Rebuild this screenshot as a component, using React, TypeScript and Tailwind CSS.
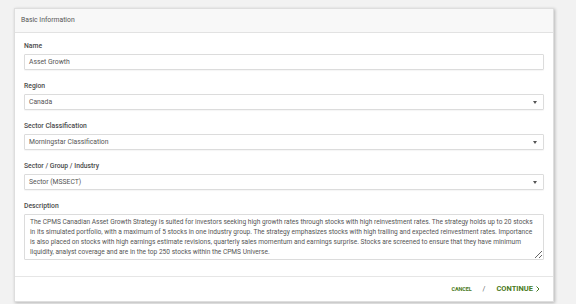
import React from "react";

const description = [
    "The CPMS Canadian Asset Growth Strategy is suited for investors seeking high growth rates through stocks with high reinvestment rates. The strategy holds up to 20 stocks",
    "in its simulated portfolio, with a maximum of 5 stocks in one industry group. The strategy emphasizes stocks with high trailing and expected reinvestment rates. Importance",
    "is also placed on stocks with high earnings estimate revisions, quarterly sales momentum and earnings surprise. Stocks are screened to ensure that they have minimum",
    "liquidity, analyst coverage and are in the top 250 stocks within the CPMS Universe.",
].join("\n");

function Label({ children }: { children: React.ReactNode }) {
    return <div className="h-[10px] leading-[10px] text-[6.8px] font-medium text-[#4a4a4a] mb-[3px]">{children}</div>;
}

function TextField({ label, value }: { label: string; value: string }) {
    return (
        <div className="mb-[11px]">
            <Label>{label}</Label>
            <div className="h-[16px] border border-[#dcdcdc] rounded-[1px] shadow-[0_1px_1px_rgba(0,0,0,0.04)] pl-[4px] flex items-center text-[6.8px] text-[#555]">
                {value}
            </div>
        </div>
    );
}

function SelectField({ label, value }: { label: string; value: string }) {
    return (
        <div className="mb-[11px]">
            <Label>{label}</Label>
            <div className="h-[16px] border border-[#dcdcdc] rounded-[1px] shadow-[0_1px_1px_rgba(0,0,0,0.04)] pl-[4px] pr-[6px] flex items-center justify-between text-[6.8px] text-[#555]">
                <span>{value}</span>
                <svg width="4" height="3" viewBox="0 0 4 3">
                    <path d="M0 0H4L2 3Z" fill="#555" />
                </svg>
            </div>
        </div>
    );
}

export default function App() {
    return (
        <div className="w-[576px] h-[304px] bg-[#f2f2f2] font-['Roboto',sans-serif] pt-[8px] pl-[14px] overflow-hidden">
            <div className="w-[540px] h-[294px] bg-white border border-[#dedede] shadow-[1px_1px_3px_rgba(0,0,0,0.25)] flex flex-col">
                {/* Header */}
                <div className="h-[24px] shrink-0 bg-[#f8f8f8] border-b border-[#e2e2e2] flex items-center pl-[6px] text-[6.8px] text-[#555]">
                    Basic Information
                </div>

                {/* Body */}
                <div className="flex-1 px-[9px] pt-[8px]">
                    <TextField label="Name" value="Asset Growth" />
                    <SelectField label="Region" value="Canada" />
                    <SelectField label="Sector Classification" value="Morningstar Classification" />
                    <SelectField label="Sector / Group / Industry" value="Sector (MSSECT)" />
                    <div>
                        <Label>Description</Label>
                        <textarea
                            readOnly
                            wrap="off"
                            value={description}
                            className="block w-full h-[46px] border border-[#dcdcdc] rounded-[1px] pl-[5px] pr-[4px] pt-[2px] text-[6.6px] leading-[10px] text-[#555] outline-none overflow-hidden font-['Roboto',sans-serif]"
                        />
                    </div>
                </div>

                {/* Footer */}
                <div className="h-[25px] shrink-0 border-t border-[#e6e6e6] flex items-center justify-end pr-[13px]">
                    <button className="text-[5.5px] font-bold text-[#4a7a22] tracking-tight">CANCEL</button>
                    <span className="text-[7px] text-[#666] mx-[11px]">/</span>
                    <button className="flex items-center gap-[3px] text-[7.5px] font-bold text-[#4a7a22]">
                        CONTINUE
                        <svg width="4" height="6" viewBox="0 0 4 6">
                            <path d="M0.5 0.5L3 3L0.5 5.5" fill="none" stroke="#4a7a22" strokeWidth="1" />
                        </svg>
                    </button>
                </div>
            </div>
        </div>
    );
}
